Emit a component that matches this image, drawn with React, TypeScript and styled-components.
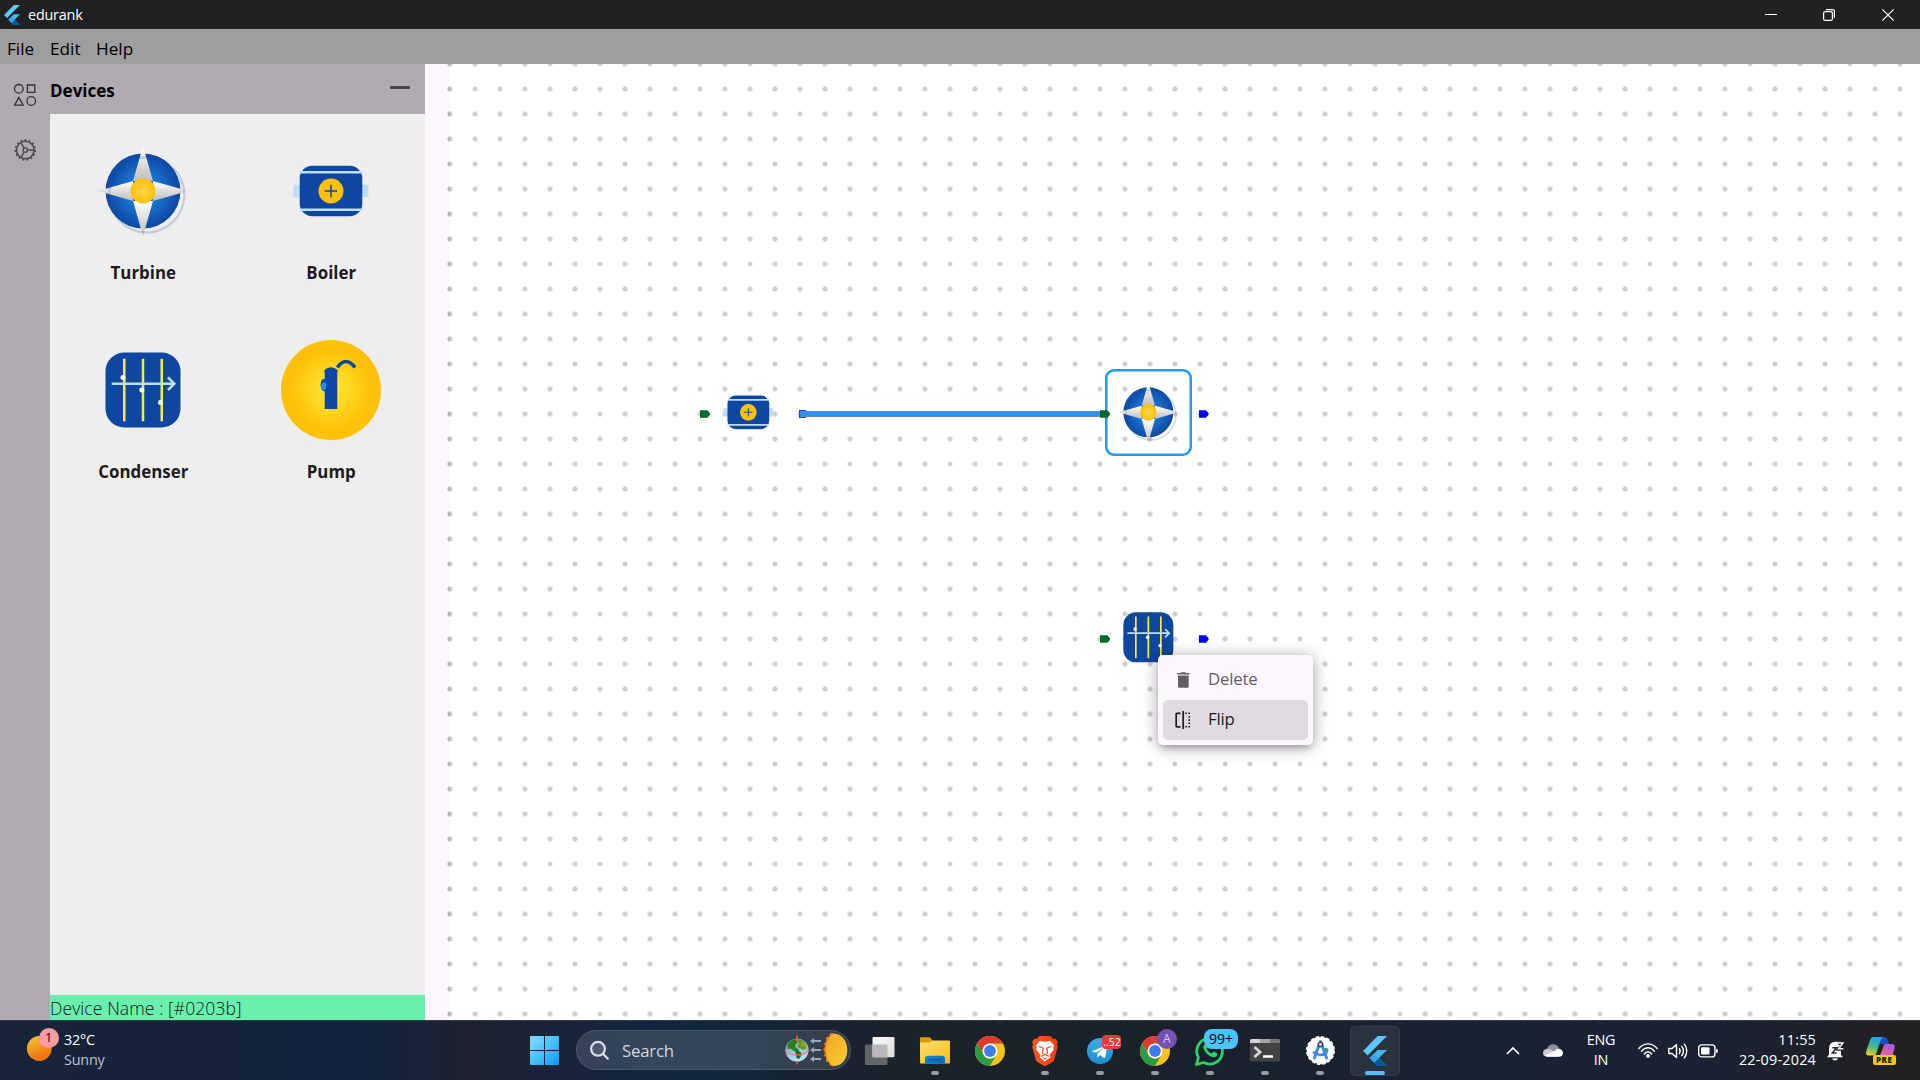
import React from "react";
import styled, { createGlobalStyle } from "styled-components";

const GlobalStyle = createGlobalStyle`
  * { box-sizing: border-box; }
  html, body { margin: 0; padding: 0; overflow: hidden; }
  body {
    font-family: "Open Sans", "Noto Sans", "Liberation Sans", sans-serif;
    font-size: 16.8px;
    color: #1d1b20;
  }
  svg { display: block; flex: none; overflow: visible; }
`;

/* ---------- window shell ---------- */

const Desktop = styled.div`
  display: flex;
  flex-direction: column;
  width: 1920px;
  height: 1080px;
  background: #fff;
`;

const TitleBar = styled.header`
  display: flex;
  align-items: center;
  height: 29px;
  padding-left: 4px;
  background: #1f2122;
  color: #fff;
`;

const WindowTitle = styled.span`
  flex: 1;
  margin-left: 8px;
  font-size: 14.4px;
  letter-spacing: -0.2px;
  line-height: 29px;
`;

const WindowButtons = styled.div`
  display: grid;
  grid-template-columns: 58px 58px 60px;
  width: 178px;
`;

const WindowButton = styled.span`
  display: flex;
  align-items: center;
  justify-content: center;
  height: 28px;
`;

const MenuBar = styled.nav`
  display: flex;
  gap: 16px;
  height: 35px;
  padding: 4px 7px 0;
  background: #9e9e9e;
  color: #000;
`;

const MenuEntry = styled.span<{ $w: number }>`
  width: ${(p) => p.$w}px;
  line-height: 31px;
  font-size: 17.2px;
  font-weight: 500;
  white-space: nowrap;
`;

const Workspace = styled.main`
  display: flex;
  height: 956px;
`;

const Rail = styled.aside`
  display: flex;
  flex-direction: column;
  align-items: center;
  gap: 33px;
  width: 50px;
  padding-top: 20px;
  background: #b0abb1;
`;

const SidePanel = styled.section`
  display: flex;
  flex-direction: column;
  width: 375px;
  background: #eee;
`;

const PanelHeader = styled.div`
  display: flex;
  justify-content: space-between;
  height: 50px;
  padding: 2.5px 15px 0 0;
  background: #b0abb1;
  color: #000;
  font-size: 17px;
  font-weight: 700;
  line-height: 47px;
`;

const CollapseButton = styled.span`
  width: 20px;
  height: 2.5px;
  margin-top: 19.5px;
  border-radius: 1px;
  background: #49454f;
`;

const Palette = styled.div`
  flex: 1;
  display: grid;
  grid-template-columns: 186.5px 189.5px;
  grid-auto-rows: 199px;
  align-content: start;
  padding-top: 27.4px;
`;

const PaletteItem = styled.div`
  display: flex;
  flex-direction: column;
  align-items: center;
  gap: 19.2px;
`;

const PaletteLabel = styled.span`
  font-size: 16.9px;
  font-weight: 700;
  line-height: 24px;
`;

const DeviceStatus = styled.div`
  height: 25px;
  padding: 2px 0 0 0;
  background: #69f0ae;
  color: #121413;
  font-size: 17.5px;
  font-weight: 300;
  line-height: 23px;
  letter-spacing: 0.1px;
`;

/* ---------- canvas ---------- */

const Canvas = styled.section`
  position: relative;
  flex: 1;
  overflow: hidden;
  background:
    radial-gradient(circle at 12.5px 12.5px, rgba(0, 0, 0, 0.2) 2.1px, transparent 2.8px) 12.5px -12.5px / 25px 25px,
    linear-gradient(to right, #fef7ff 25px, #fff 25px);
`;

const CanvasEdge = styled.div`
  position: absolute;
  left: 0;
  top: 0;
  width: 25px;
  height: 100%;
  background:
    linear-gradient(to right, #fef7ff 20px, transparent 20px),
    radial-gradient(circle at 12.5px 12.5px, rgba(0, 0, 0, 0.12) 2.1px, transparent 2.8px) 12.5px -12.5px / 25px 25px;
`;

const Node = styled.div<{ $x: number; $y: number; $selected?: boolean }>`
  position: absolute;
  left: ${(p) => p.$x}px;
  top: ${(p) => p.$y}px;
  display: flex;
  align-items: center;
  justify-content: center;
  width: 87.4px;
  height: 87.4px;
  border-radius: 9px;
  box-shadow: ${(p) => (p.$selected ? "inset 0 0 0 2.5px #2196f3" : "none")};
`;

const Port = styled.i<{ $x: number; $y: number; $color: string }>`
  position: absolute;
  left: ${(p) => p.$x}px;
  top: ${(p) => p.$y}px;
  width: 10px;
  height: 7.5px;
  background: ${(p) => p.$color};
  clip-path: polygon(0 0, 75% 0, 100% 40%, 100% 60%, 75% 100%, 0 100%);
`;

const Wire = styled.i`
  position: absolute;
  left: 374px;
  top: 347px;
  width: 306px;
  height: 6px;
  background: #2196f3;
  border: solid #6a7fc4;
  border-width: 1px 0;
`;

const WireEnd = styled.i`
  position: absolute;
  left: 373.5px;
  top: 346px;
  width: 7.5px;
  height: 8px;
  border: solid #3535ff;
  border-width: 1px 0 1px 1px;
  background: #2f92f2;
`;

const ContextMenu = styled.div`
  position: absolute;
  left: 733px;
  top: 591px;
  display: flex;
  flex-direction: column;
  width: 155px;
  height: 90px;
  padding: 5px;
  border-radius: 5px;
  background: #fef7ff;
  box-shadow: 0 5px 6px -3px rgba(0, 0, 0, 0.2), 0 2px 16px rgba(0, 0, 0, 0.38);
`;

const ContextItem = styled.div<{ $active?: boolean }>`
  display: flex;
  align-items: center;
  gap: 15px;
  height: 40px;
  padding-left: 10px;
  border-radius: 5px;
  background: ${(p) => (p.$active ? "#e0dbe1" : "transparent")};
  color: ${(p) => (p.$active ? "#1d1b20" : "#625d66")};
  letter-spacing: -0.2px;
`;

const ContextIcon = styled.span`
  display: flex;
  justify-content: center;
  width: 20px;
`;

const ContextLabel = styled.span`
  height: 40px;
  line-height: 38px;
`;

/* ---------- taskbar ---------- */

const Taskbar = styled.footer`
  display: flex;
  align-items: center;
  height: 60px;
  border-top: 1px solid #343c48;
  background: linear-gradient(
    to right,
    #17243a 0, #16223a 220px, #122341 340px, #17233b 400px, #1f2230 470px, #1a2338 540px,
    #14253f 640px, #12283c 720px, #19232f 830px, #1c222b 920px, #1a212c 1300px,
    #182335 1480px, #1a2233 1700px, #1f2128 1840px, #232021 1920px
  );
  color: #fff;
  font-size: 14.4px;
`;

const Weather = styled.div`
  display: flex;
  width: 519px;
  padding-left: 25px;
`;

const SunSlot = styled.span`
  position: relative;
  width: 39px;
  height: 40px;
`;

const Badge = styled.span<{ $x: number; $y: number; $w: number; $h: number; $bg: string; $fg: string; $fs: number }>`
  position: absolute;
  left: ${(p) => p.$x}px;
  top: ${(p) => p.$y}px;
  width: ${(p) => p.$w}px;
  height: ${(p) => p.$h}px;
  border-radius: ${(p) => (p.$h < 18 ? 4 : p.$w > p.$h ? 8 : 10)}px;
  background: ${(p) => p.$bg};
  color: ${(p) => p.$fg};
  font-size: ${(p) => p.$fs}px;
  line-height: ${(p) => p.$h}px;
  text-align: center;
`;

const TwoLines = styled.div<{ $align?: string; $ls?: number }>`
  display: flex;
  flex-direction: column;
  padding-bottom: 1px;
  line-height: 20px;
  text-align: ${(p) => p.$align || "left"};
  letter-spacing: ${(p) => p.$ls || 0}px;
  white-space: nowrap;
`;

const Muted = styled.span`
  color: #bcc3cc;
`;

const Tile = styled.div<{ $active?: boolean }>`
  position: relative;
  display: flex;
  align-items: center;
  justify-content: center;
  width: 50px;
  height: 50px;
  margin-right: 5px;
  border-radius: 5px;
  background: ${(p) => (p.$active ? "rgba(255,255,255,0.075)" : "transparent")};
  box-shadow: ${(p) => (p.$active ? "inset 0 0 0 1px rgba(255,255,255,0.06)" : "none")};
`;

const Indicator = styled.i<{ $active?: boolean }>`
  position: absolute;
  left: 50%;
  bottom: 1px;
  width: ${(p) => (p.$active ? 20 : 8)}px;
  height: 4px;
  border-radius: 2px;
  transform: translateX(-50%);
  background: ${(p) => (p.$active ? "#4cc2ff" : "#999ca1")};
`;

const SearchBox = styled.div`
  display: flex;
  align-items: center;
  width: 275px;
  height: 40px;
  margin: 0 4.4px 1px 2px;
  padding: 0 2px 0 13px;
  border: 1px solid #4b5867;
  border-radius: 20px;
  background: linear-gradient(to right, #354259, #334759 60%, #353c45);
`;

const SearchText = styled.span`
  flex: 1;
  margin-left: 13px;
  padding-top: 1px;
  color: #d3d7dc;
  font-size: 16.8px;
  letter-spacing: -0.2px;
  line-height: 38px;
`;

const Tray = styled.div`
  display: grid;
  grid-template-columns: 37px 42px 54px 40px 20px 40px 88px 39px 51px;
  align-items: center;
  justify-items: center;
  margin-left: auto;
  padding-right: 14px;
`;

const ClockCell = styled.div`
  justify-self: end;
`;

/* ---------- drawings ---------- */

const TurbineIcon = ({ size, id }: { size: number; id: string }) => (
  <svg width={size} height={size} viewBox="-50 -50 100 100">
    <defs>
      <radialGradient id={`${id}d`}>
        <stop offset="0" stopColor="#1976d2" />
        <stop offset="0.5" stopColor="#186dcb" />
        <stop offset="1" stopColor="#0d47a1" />
      </radialGradient>
      <linearGradient id={`${id}p`} x1="0" y1="0" x2="0" y2="1">
        <stop offset="0" stopColor="#fff" />
        <stop offset="1" stopColor="#bdbdbd" />
      </linearGradient>
      <radialGradient id={`${id}c`}>
        <stop offset="0" stopColor="#ffd54f" />
        <stop offset="1" stopColor="#ffc107" />
      </radialGradient>
    </defs>
    <circle r="37.5" fill={`url(#${id}d)`} />
    <g fill={`url(#${id}p)`}>
      <path d="M0-45 10-10H-10Z" />
      <path d="M45 0 10 10V-10Z" />
      <path d="M0 45-10 10H10Z" />
      <path d="M-45 0-10-10V10Z" />
    </g>
    <circle cx="3.8" cy="3.8" r="37.6" fill="none" stroke="#0d47a1" strokeWidth="2.2" opacity="0.2" />
    <circle r="12.5" fill={`url(#${id}c)`} />
  </svg>
);

const BoilerIcon = ({ size }: { size: number }) => (
  <svg width={size} height={size} viewBox="-50 -50 100 100">
    <path d="M-37.5-6.3h75V6.3h-75Z" fill="#bbdefb" />
    <rect x="-31.3" y="-25.2" width="62.6" height="50.4" rx="12.5" fill="#0d47a1" />
    <path d="M-31.3-18.7H31.3M-31.3 18.7H31.3" stroke="#bbdefb" strokeWidth="2.5" />
    <circle r="12.5" fill="#ffc107" />
    <path d="M-6.3 0H6.3M0-6.3V6.3" stroke="#0d47a1" strokeWidth="1.5" />
  </svg>
);

const CondenserIcon = ({ size }: { size: number }) => (
  <svg width={size} height={size} viewBox="-50 -50 100 100">
    <rect x="-37.5" y="-37.5" width="75" height="75" rx="18.8" fill="#0d47a1" />
    <path d="M-18.75-31.3V31.3M0-31.3V31.3M18.75-31.3V31.3" stroke="#ffeb3b" strokeWidth="2.5" />
    <path d="M-31.3-6.3H31.3M25-12.5l6.3 6.2L25 0" fill="none" stroke="#bbdefb" strokeWidth="2.5" />
    <g fill="#fff">
      <circle cx="-20" cy="-12.5" r="2.5" />
      <circle cx="-1.2" cy="0" r="2.5" />
      <circle cx="17.5" cy="12.5" r="2.5" />
    </g>
  </svg>
);

const PumpIcon = ({ size }: { size: number }) => (
  <svg width={size} height={size} viewBox="-50 -50 100 100">
    <defs>
      <radialGradient id="pumpDisc">
        <stop offset="0" stopColor="#ffeb3b" />
        <stop offset="0.8" stopColor="#ffc107" />
        <stop offset="1" stopColor="#ffc107" />
      </radialGradient>
    </defs>
    <circle r="50" fill="url(#pumpDisc)" />
    <path d="M-7-19.5Q0-26 7-19.5L6.3-18V19H-6.3V-18Z" fill="#0d47a1" />
    <path d="M6.3-22.5Q15-34.5 24-22.5" fill="none" stroke="#0d47a1" strokeWidth="3.5" />
    <ellipse cx="-7" cy="-5" rx="3.4" ry="6.2" fill="#0d47a1" />
    <ellipse cx="-7.3" cy="-3.8" rx="2.6" ry="3.8" fill="#2196f3" transform="rotate(12 -7.3 -3.8)" />
  </svg>
);

const FlutterLogo = ({ w, h }: { w: number; h: number }) => (
  <svg width={w} height={h} viewBox="0 0 24 30" preserveAspectRatio="none">
    <path d="M14.7 0 0 15l4.6 4.6L24 0Z" fill="#5cc8f8" />
    <path d="M14.6 13.9 6.6 22l8 8H24l-8.1-8 8.1-8.1Z" fill="#47b8f0" />
    <path d="m11.2 26.6 3.4 3.4H24l-8-8Z" fill="#08589c" />
    <path d="m6.6 22 4.6-4.6L15.9 22l-4.7 4.6Z" fill="#2fa9ee" />
  </svg>
);

const ShapesIcon = () => (
  <svg width="22" height="22" viewBox="0 0 22 22" fill="none" stroke="#353139" strokeWidth="1.3">
    <circle cx="4.8" cy="4.8" r="4.3" />
    <path d="M13.4 1h7.4v7.4h-7.4ZM4.8 13.4l4.4 7.8H.6Z" />
    <circle cx="17.2" cy="17" r="4.3" />
  </svg>
);

const GearIcon = () => (
  <svg width="22" height="22" viewBox="-11.3 -11 22 22" fill="none" stroke="#49454f">
    <circle r="8.8" strokeWidth="1.5" />
    <circle r="10" strokeWidth="1.5" strokeDasharray="1.8 2.39" />
    <circle r="2.2" strokeWidth="1.3" />
    <path d="M2.2 0H8.8M-1.1-1.9-4.4-7.6M-1.1 1.9-4.4 7.6" strokeWidth="1.4" />
  </svg>
);

const TrashIcon = () => (
  <svg width="13" height="16" viewBox="0 0 13 16" fill="#625d66">
    <path d="M.2 1H3.5L4.3.2h4.1L9.2 1h3.3v1.6H.2ZM1 3.6h10.7v10.6q0 1.5-1.5 1.5H2.5Q1 15.7 1 14.2Z" />
  </svg>
);

const FlipIcon = () => (
  <svg width="16" height="18" viewBox="0 0 16 18" fill="none" stroke="#1d1b20" strokeWidth="1.7">
    <path d="M5.5 2.3H1.9Q1.2 2.3 1.2 3v12q0 .8.7.8H5.5" />
    <path d="M8.2 0V18" />
    <path d="M10.3 2.3h1.6M10.3 15.8h1.6M13.4 2.3h1.6M13.4 15.8h1.6M14.2 5.2v1.6M14.2 8.3v1.6M14.2 11.4v1.6" strokeWidth="1.6" />
  </svg>
);

const SunIcon = () => (
  <svg width="29" height="33" viewBox="0 0 29 33">
    <defs>
      <linearGradient id="sun" x1="0.2" y1="0" x2="0.7" y2="1">
        <stop offset="0.1" stopColor="#eebb35" />
        <stop offset="0.8" stopColor="#f5750f" />
      </linearGradient>
    </defs>
    <circle cx="14.3" cy="18.5" r="12.4" fill="url(#sun)" />
  </svg>
);

const StartIcon = () => (
  <svg width="29" height="29" viewBox="0 0 29 29">
    <defs>
      <linearGradient id="win" x1="0" y1="0" x2="1" y2="1">
        <stop offset="0" stopColor="#86dcfd" />
        <stop offset="0.5" stopColor="#45c3fb" />
        <stop offset="1" stopColor="#0d96f8" />
      </linearGradient>
    </defs>
    <path d="M1 0H14V14H0V1Q0 0 1 0ZM15 0H28Q29 0 29 1V14H15ZM0 15H14V29H1Q0 29 0 28ZM15 15H29V28Q29 29 28 29H15Z" fill="url(#win)" />
  </svg>
);

const SearchIcon = () => (
  <svg width="19" height="19" viewBox="0 0 19 19" fill="none" stroke="#dcdfe3" strokeWidth="2.2">
    <circle cx="8" cy="7.8" r="6.9" fill="rgba(255,255,255,0.12)" />
    <path d="m13 12.8 4.8 4.9" strokeLinecap="round" />
  </svg>
);

const EquinoxArt = () => (
  <svg width="63" height="34" viewBox="0 0 63 34">
    <defs>
      <linearGradient id="sea" x1="0" y1="0" x2="0.4" y2="1">
        <stop offset="0" stopColor="#6d93bd" />
        <stop offset="1" stopColor="#b8dcff" />
      </linearGradient>
      <linearGradient id="halfsun" x1="0" y1="0" x2="1" y2="1">
        <stop offset="0" stopColor="#efab24" />
        <stop offset="1" stopColor="#fbcb33" />
      </linearGradient>
    </defs>
    <circle cx="12" cy="17" r="11.6" fill="url(#sea)" />
    <path d="M2.5 12Q5 7 10 6l3 3-3 3 1 3 3 1.5-1 2-4-.5-3.5-2.5-3 .5Z" fill="#2c7d1c" />
    <path d="M12 6.5q6-.5 9 5l.5 4-3.5 1.500-3-2-3-1 2-3Z" fill="#5f9a10" />
    <path d="M16 8q4 1 5.500 5l-2.500 2-2.500-3Z" fill="#8aa60c" />
    <path d="M10 17.500l5 1 2 3-3 4.500-2.500-1-.5-3.500Z" fill="#1d6a1c" />
    <path d="M.5 17.500Q3 22 12 22t11.300-5.500" fill="none" stroke="#ef7f66" strokeWidth="1.2" />
    <path d="M12 2.500V9M12 28V31.500" stroke="#f0583f" strokeWidth="1.6" />
    <path d="M27.500 8h8.500M27.500 17h8.500M27.500 26h8.500" stroke="#92a9c6" strokeWidth="1.8" />
    <path d="m25 8 4-3v6ZM25 17l4-3v6ZM25 26l4-3v6Z" fill="#92a9c6" />
    <path d="m49 0-4 .5-1 3-3 1v4l-2 2 1 3-2 3 2 3-1 3 2 2v4l3 1 1 3 4 1Z" fill="#f07d12" />
    <path d="M49 .7C57 .7 62.300 8 62.300 17S57 33 49 33q-3-1-4-3-4-5-4-13t4-13q1-3 4-3.300Z" fill="url(#halfsun)" />
  </svg>
);

const TaskViewIcon = () => (
  <svg width="30" height="28" viewBox="0 0 30 28">
    <defs>
      <linearGradient id="tv" x1="0" y1="0" x2="1" y2="1">
        <stop offset="0" stopColor="#fff" />
        <stop offset="1" stopColor="#d9d9d9" />
      </linearGradient>
    </defs>
    <rect x="0" y="7.5" width="22.5" height="20.5" rx="1.3" fill="#646566" />
    <rect x="7.5" y="0" width="22" height="20.3" rx="1.3" fill="url(#tv)" />
    <path d="M7.500 7.500H21.300q1.200 0 1.200 1.200V20.300H7.500Z" fill="#b9b9b9" />
  </svg>
);

const ExplorerIcon = () => (
  <svg width="30" height="27" viewBox="0 0 30 27">
    <defs>
      <linearGradient id="fold" x1="0" y1="0" x2="1" y2="1">
        <stop offset="0" stopColor="#ffdf70" />
        <stop offset="1" stopColor="#fbbb1c" />
      </linearGradient>
      <linearGradient id="tray" x1="0" y1="0" x2="1" y2="1">
        <stop offset="0" stopColor="#1289dc" />
        <stop offset="1" stopColor="#0669bb" />
      </linearGradient>
    </defs>
    <path d="M0 1.500Q0 .3 1.200.3H9q1 0 2 1.200l1.500 2L9 8H0Z" fill="#dd9b0b" />
    <path d="M0 5.500H9.500L12.500 3.500H29q1 0 1 1V25.600q0 1-1 1H1q-1 0-1-1Z" fill="url(#fold)" />
    <path d="M5 22q0-3.300 3.300-3.300H21.700Q25 18.700 25 22v4.600H5Z" fill="url(#tray)" />
    <path d="M8.500 22.700H21.500" stroke="#08508e" strokeWidth="1.2" />
  </svg>
);

const ChromeIcon = () => (
  <svg width="30" height="30" viewBox="-15 -15 30 30">
    <circle r="15" fill="#fcc31e" />
    <path d="M-13-7.5A15 15 0 0 1 13-7.5H0A7.5 7.5 0 0 0-6.5 3.75Z" fill="#e03b30" />
    <path d="M-13-7.5-6.5 3.75A7.5 7.5 0 0 0 6.5 3.75L0 15A15 15 0 0 1-13-7.5Z" fill="#2b9b47" />
    <circle r="7.4" fill="#fff" />
    <circle r="5.9" fill="#3b7ded" />
  </svg>
);

const BraveIcon = () => (
  <svg width="26" height="30" viewBox="0 0 26 30">
    <defs>
      <linearGradient id="brave" x1="0" x2="1">
        <stop offset="0" stopColor="#fb5a22" />
        <stop offset="1" stopColor="#fa3a08" />
      </linearGradient>
    </defs>
    <path d="M7.500 0h11l2.800 3 2.200-.3L25.800 6 25 8.500l.7 2.200-3.500 13q-.5 1.500-2 2.500L14.500 29.600q-1.500.8-3 0L5.800 26.200q-1.500-1-2-2.500L.3 10.700 1 8.500.2 6 2.500 2.700 4.700 3Z" fill="url(#brave)" />
    <path d="M8 4.700l3 .8h4l3-.8 4 4.600-.9 2.200.7 2-4.300 5.600 1 2.200-5.500 4.300-5.500-4.300 1-2.200L4.200 13.500l.7-2L4 9.300Z" fill="#fff" />
    <path d="M6.500 10.500l4 1.200.7 1-.8 3.500 1 1.700M19.500 10.500l-4 1.200-.7 1 .8 3.500-1 1.700M9 20.300l4-1.800 4 1.800M11.500 22l1.500 1 1.500-1" fill="none" stroke="#fb4d1a" strokeWidth="1.3" />
  </svg>
);

const TelegramIcon = () => (
  <svg width="26" height="26" viewBox="0 0 26 26">
    <defs>
      <linearGradient id="tg" x1="0" y1="0" x2="0" y2="1">
        <stop offset="0" stopColor="#35aee2" />
        <stop offset="1" stopColor="#1f8fcb" />
      </linearGradient>
    </defs>
    <circle cx="13" cy="13" r="13" fill="url(#tg)" />
    <path d="M5.300 13 19.500 7.200q1-.3.900.9L18 19.200q-.3 1-1.300.5L13 17l-2 2-.8.2.3-3.700 6.300-5.700-7.700 5-3.600-1.100q-.8-.3-.2-.7Z" fill="#fff" />
  </svg>
);

const WhatsAppIcon = () => (
  <svg width="30" height="30" viewBox="0 0 30 30">
    <path d="M1.500 28.500 3.400 21.400A12.800 12.800 0 1 1 8.600 26.500Z" fill="none" stroke="#27d366" strokeWidth="2.8" strokeLinejoin="round" />
    <path d="M10.500 7.800q-3 1.700-2 4.700 2 5.300 7.300 8 3.700 2 6-.8.800-1.500.3-2.500l-3.300-1.600-2 2q-3.500-1.300-5.200-4.600l1.300-2-1.300-3Z" fill="#27d366" />
  </svg>
);

const TerminalIcon = () => (
  <svg width="30" height="23" viewBox="0 0 30 23">
    <rect width="30" height="22.5" rx="1.5" fill="#434343" />
    <path d="M1.500 0H10V4H0V1.500Q0 0 1.500 0Z" fill="#d2d2d2" />
    <path d="M10 0H20V4H10Z" fill="#a5a5a8" />
    <path d="M20 0h8.500Q30 0 30 1.500V4H20Z" fill="#77777b" />
    <path d="m4.500 8 5.500 5-5.500 5" fill="none" stroke="#d5d5d5" strokeWidth="2.8" />
    <path d="M13 17.500H23" stroke="#fff" strokeWidth="2.5" />
  </svg>
);

const StudioIcon = () => (
  <svg width="29" height="29" viewBox="-14.5 -14.5 29 29">
    <circle r="13.6" fill="#fff" />
    <circle r="13.7" fill="none" stroke="#fff" strokeWidth="1.5" strokeDasharray="3.6 1.78" />
    <circle cx="5.2" cy="0" r="2.7" fill="#34a853" />
    <path d="M-1.300-6-6 7.500M1.300-6 6 7.500" stroke="#4285f4" strokeWidth="3" strokeLinecap="round" />
    <path d="M-7.500 1.500Q0 7 6.500 2" fill="none" stroke="#4285f4" strokeWidth="2.6" />
    <path d="M0-10V-6" stroke="#35475a" strokeWidth="2.2" />
    <circle cy="-6" r="2.2" fill="#fff" stroke="#35475a" strokeWidth="1.6" />
  </svg>
);

const CloudIcon = () => (
  <svg width="20" height="13" viewBox="0 0 20 13">
    <path d="M4 5Q5.500.3 10 .3q4.500 0 6 4.200L11 9 4 7Z" fill="#8b919a" />
    <path d="M0 9q0-4 4.500-4.300 3 0 5 2L14.500 12.500H4Q0 12.500 0 9Z" fill="#c9cdd3" />
    <path d="M2 11.500 12.500 6.300q1-2 3.500-1.600 3.800.8 4 4.300-.2 3.600-4 3.700H4.200Q3 12.700 2 11.500Z" fill="#fff" />
  </svg>
);

const WifiIcon = () => (
  <svg width="20" height="15" viewBox="0 0 20 15" fill="none" stroke="#fff" strokeWidth="1.4" strokeLinecap="round">
    <path d="M.8 5.500Q5 .9 10 .9t9.200 4.600" />
    <path d="M3.600 8.300Q6.500 4.800 10 4.800t6.400 3.500" />
    <path d="M6.300 11Q8 8.700 10 8.700T13.700 11" />
    <circle cx="10" cy="12.9" r="1.2" fill="#fff" />
  </svg>
);

const SpeakerIcon = () => (
  <svg width="20" height="16" viewBox="0 0 20 16" fill="none" stroke="#fff" strokeWidth="1.4" strokeLinecap="round" strokeLinejoin="round">
    <path d="M.8 5.500H4L8.500 1.500V14.500L4 10.500H.8Z" />
    <path d="M11.300 5.500q1.700 2.500 0 5M13.800 3.300q3.200 4.700 0 9.400M16.400 1.200q4.700 6.800 0 13.600" />
  </svg>
);

const BatteryIcon = () => (
  <svg width="20" height="14" viewBox="0 0 20 14">
    <rect x=".7" y=".9" width="16.3" height="12" rx="3" fill="none" stroke="#fff" strokeWidth="1.4" />
    <rect x="3" y="3.2" width="8.5" height="7.4" rx="1" fill="#fff" />
    <path d="M18 4.800q2 .4 2 2.100t-2 2.100Z" fill="#fff" />
  </svg>
);

const BellIcon = () => (
  <svg width="18" height="20" viewBox="0 0 18 20">
    <path d="M2 13.500V7.500Q2.200 1 8.500.7h5.500v13l2 2.500H0Z" fill="#fff" />
    <path d="M5 17.500h6q-.7 2-3 2t-3-2Z" fill="#fff" />
    <path d="M5.300 6.800h4.200L5.300 12h4.200" fill="none" stroke="#1d222b" strokeWidth="1.5" />
    <path d="M11.500 2.500h5L11.500 8.200h5" fill="none" stroke="#1d222b" strokeWidth="3" />
    <path d="M11.500 2h4.500L11.800 7.700h4.500" fill="none" stroke="#fff" strokeWidth="1.4" />
  </svg>
);

const CopilotSlot = styled.span`
  position: relative;
  width: 29px;
  height: 28px;
`;

const PreTag = styled.span`
  position: absolute;
  left: 7px;
  top: 18.5px;
  width: 22.5px;
  height: 9.5px;
  border-radius: 2px;
  background: #fcc70f;
  color: #231c00;
  font-size: 8px;
  font-weight: 800;
  line-height: 9.5px;
  letter-spacing: 0.5px;
  text-align: center;
`;

const CopilotIcon = () => (
  <svg width="29" height="28" viewBox="0 0 29 28">
    <defs>
      <linearGradient id="cpl" x1="0.5" y1="0" x2="0.2" y2="1">
        <stop offset="0" stopColor="#20a5ee" />
        <stop offset="0.5" stopColor="#44b887" />
        <stop offset="1" stopColor="#f4ce15" />
      </linearGradient>
      <linearGradient id="cpr" x1="0.8" y1="0" x2="0.2" y2="1">
        <stop offset="0" stopColor="#a45af0" />
        <stop offset="1" stopColor="#f5648c" />
      </linearGradient>
    </defs>
    <path d="M8 0H18q3 0 4 4l1 3H15Z" fill="#1850cf" />
    <path d="M8 0h9q-2 1-3 5l-3.500 11q-.8 2.500-3 2.500H3q-3.700 0-2.800-4L4 3Q5 0 8 0Z" fill="url(#cpl)" />
    <path d="M19 7h7q3.500.3 2.500 4.500L26.500 19H12q2.500-.5 3.500-4L17.500 9q.5-2 1.500-2Z" fill="url(#cpr)" />
  </svg>
);

/* ---------- page ---------- */

const devices = [
  { name: "Turbine", icon: <TurbineIcon size={100} id="tp" /> },
  { name: "Boiler", icon: <BoilerIcon size={100} /> },
  { name: "Condenser", icon: <CondenserIcon size={100} /> },
  { name: "Pump", icon: <PumpIcon size={100} /> },
];

const NODE_ICON = 66.7;

export default function App() {
  return (
    <>
      <GlobalStyle />
      <Desktop>
        <TitleBar>
          <FlutterLogo w={16} h={20} />
          <WindowTitle>edurank</WindowTitle>
          <WindowButtons>
            <WindowButton>
              <svg width="12" height="12" viewBox="0 0 12 12"><path d="M0 5.500H12" stroke="#fff" /></svg>
            </WindowButton>
            <WindowButton>
              <svg width="12" height="12" viewBox="0 0 12 12" fill="none" stroke="#fff" strokeWidth="1.2">
                <rect x=".6" y="2.6" width="8.8" height="8.8" rx="1.5" />
                <path d="M3 .6H9.400Q11.400.6 11.400 2.600V9" />
              </svg>
            </WindowButton>
            <WindowButton>
              <svg width="12" height="12" viewBox="0 0 12 12"><path d="m.3.300 11.400 11.400M11.700.3.300 11.700" stroke="#fff" strokeWidth="1.2" /></svg>
            </WindowButton>
          </WindowButtons>
        </TitleBar>
        <MenuBar>
          <MenuEntry $w={27}>File</MenuEntry>
          <MenuEntry $w={30}>Edit</MenuEntry>
          <MenuEntry $w={38}>Help</MenuEntry>
        </MenuBar>
        <Workspace>
          <Rail>
            <ShapesIcon />
            <GearIcon />
          </Rail>
          <SidePanel>
            <PanelHeader>
              Devices
              <CollapseButton />
            </PanelHeader>
            <Palette>
              {devices.map((d) => (
                <PaletteItem key={d.name}>
                  {d.icon}
                  <PaletteLabel>{d.name}</PaletteLabel>
                </PaletteItem>
              ))}
            </Palette>
            <DeviceStatus>Device Name : [#0203b]</DeviceStatus>
          </SidePanel>
          <Canvas>
            <CanvasEdge />
            <Node $x={280} $y={305}><BoilerIcon size={NODE_ICON} /></Node>
            <Node $x={680} $y={305} $selected><TurbineIcon size={NODE_ICON} id="tn" /></Node>
            <Node $x={680} $y={530}><CondenserIcon size={NODE_ICON} /></Node>
            <Wire />
            <WireEnd />
            <Port $x={275} $y={346.2} $color="#006b2d" />
            <Port $x={675} $y={346.2} $color="#006b2d" />
            <Port $x={773.5} $y={346.2} $color="#0000ff" />
            <Port $x={675} $y={571.2} $color="#006b2d" />
            <Port $x={773.5} $y={571.2} $color="#0000ff" />
            <ContextMenu>
              <ContextItem>
                <ContextIcon><TrashIcon /></ContextIcon>
                <ContextLabel>Delete</ContextLabel>
              </ContextItem>
              <ContextItem $active>
                <ContextIcon><FlipIcon /></ContextIcon>
                <ContextLabel>Flip</ContextLabel>
              </ContextItem>
            </ContextMenu>
          </Canvas>
        </Workspace>
        <Taskbar>
          <Weather>
            <SunSlot>
              <SunIcon />
              <Badge $x={13.5} $y={-2} $w={20} $h={20} $bg="#ff99a4" $fg="#000" $fs={12.5}>1</Badge>
            </SunSlot>
            <TwoLines $ls={-0.2}>
              <span>32°C</span>
              <Muted>Sunny</Muted>
            </TwoLines>
          </Weather>
          <Tile><StartIcon /></Tile>
          <SearchBox>
            <SearchIcon />
            <SearchText>Search</SearchText>
            <EquinoxArt />
          </SearchBox>
          <Tile><TaskViewIcon /></Tile>
          <Tile><ExplorerIcon /><Indicator /></Tile>
          <Tile><ChromeIcon /></Tile>
          <Tile><BraveIcon /><Indicator /></Tile>
          <Tile>
            <TelegramIcon />
            <Indicator />
            <Badge $x={27} $y={9.5} $w={19} $h={14} $bg="#e93a34" $fg="#fff" $fs={10.5}>..52</Badge>
          </Tile>
          <Tile>
            <ChromeIcon />
            <Indicator />
            <Badge $x={26.5} $y={3.8} $w={20} $h={20} $bg="#7650b5" $fg="#d8cdec" $fs={12}>A</Badge>
          </Tile>
          <Tile>
            <WhatsAppIcon />
            <Indicator />
            <Badge $x={18.5} $y={3.8} $w={34} $h={20} $bg="#4cc2ff" $fg="#000" $fs={14}>99+</Badge>
          </Tile>
          <Tile><TerminalIcon /><Indicator /></Tile>
          <Tile><StudioIcon /><Indicator /></Tile>
          <Tile $active><FlutterLogo w={24} h={30} /><Indicator $active /></Tile>
          <Tray>
            <svg width="16" height="8" viewBox="0 0 16 8"><path d="m1 7 6-6 6 6" fill="none" stroke="#fff" strokeWidth="1.7" /></svg>
            <CloudIcon />
            <TwoLines $align="center" $ls={-0.3}>
              <span>ENG</span>
              <span>IN</span>
            </TwoLines>
            <WifiIcon />
            <SpeakerIcon />
            <BatteryIcon />
            <ClockCell>
              <TwoLines $align="right" $ls={0.2}>
                <span>11:55</span>
                <span>22-09-2024</span>
              </TwoLines>
            </ClockCell>
            <BellIcon />
            <CopilotSlot>
              <CopilotIcon />
              <PreTag>PRE</PreTag>
            </CopilotSlot>
          </Tray>
        </Taskbar>
      </Desktop>
    </>
  );
}
